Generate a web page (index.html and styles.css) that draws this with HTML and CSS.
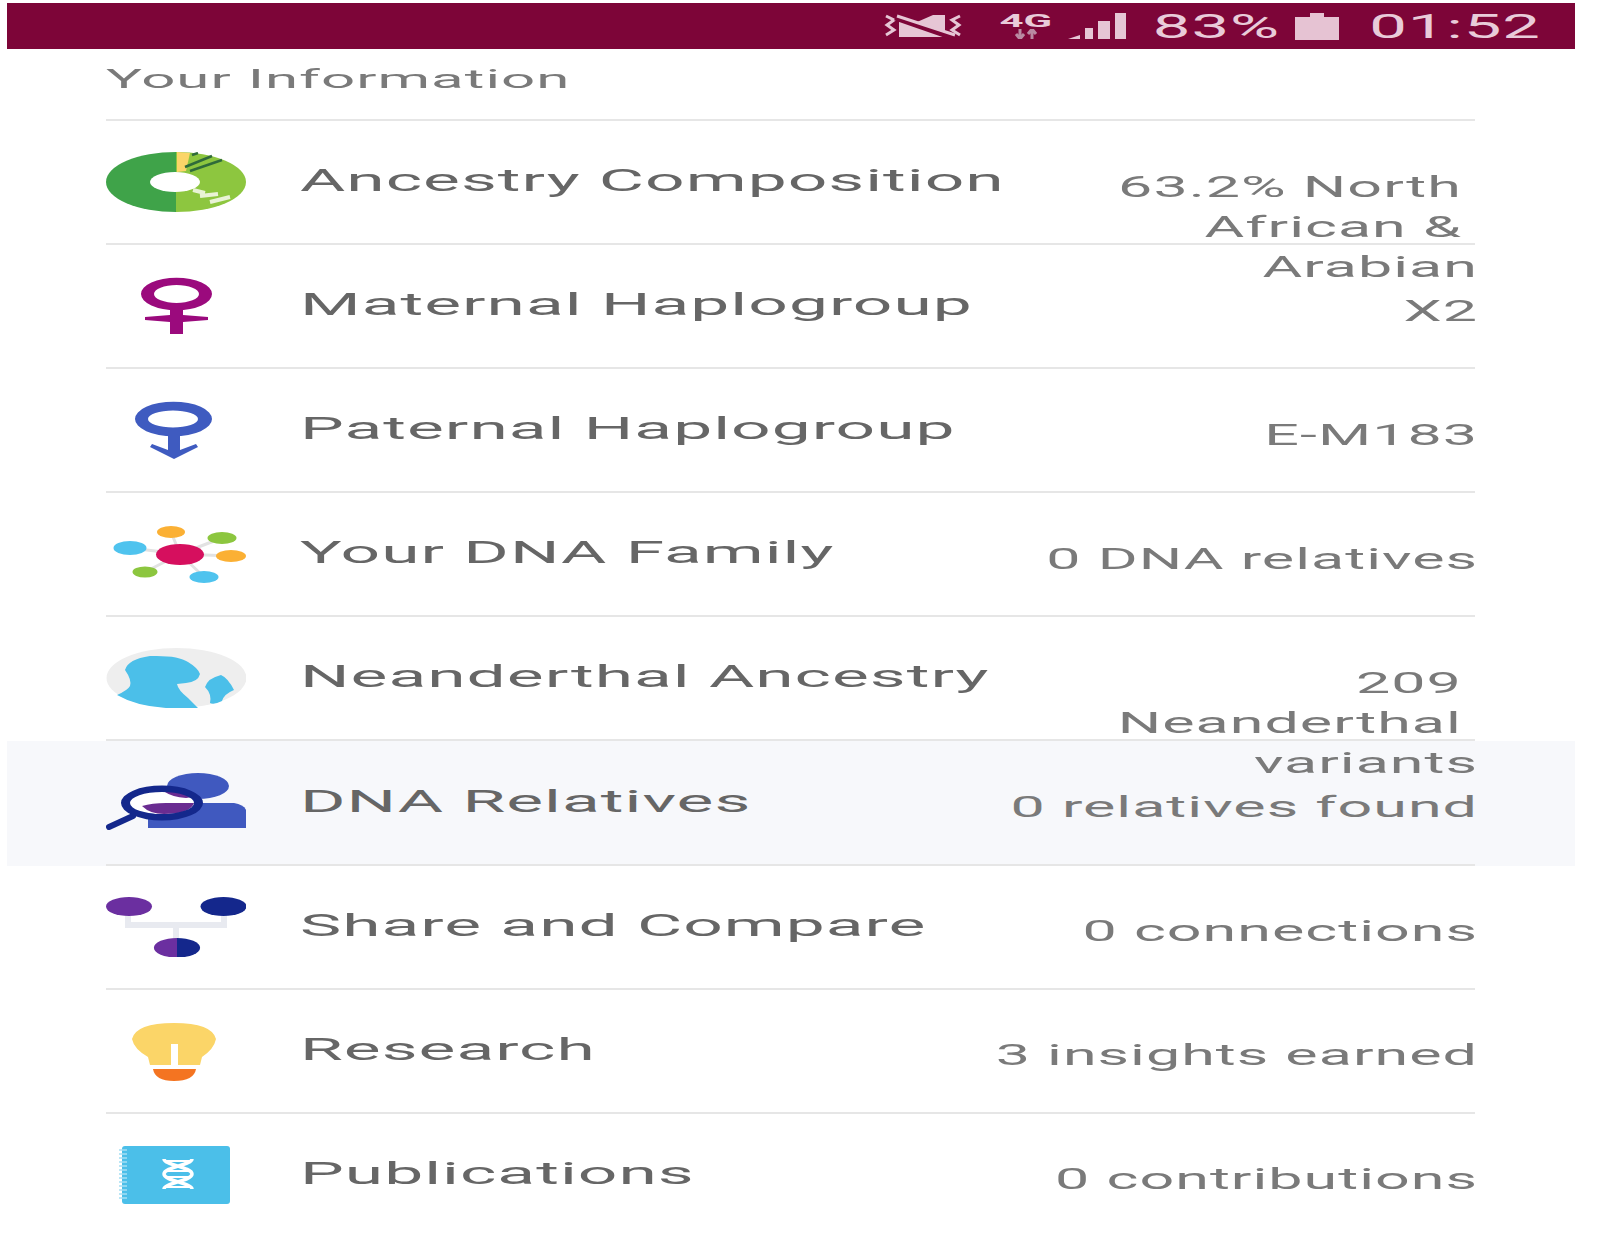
FILE: index.html
```html
<!DOCTYPE html>
<html lang="en">
<head>
  <meta charset="UTF-8" />
  <meta name="viewport" content="width=device-width, initial-scale=1.0" />
  <title>Your Information</title>
  <link rel="stylesheet" href="styles.css">
</head>
<body>
  <div class="page">
    <div class="status">
      <svg class="status-mute" viewBox="0 0 84 26">
        <path d="M5 3 L13 7 L6 12 L13 17 L5 22 M79 3 L71 7 L78 12 L71 17 L79 22" fill="none" stroke="#e6c6d5" stroke-width="3" />
        <path d="M18 9 H36 L52 2 H64 V24 H18 Z" fill="#e6c6d5" />
        <path d="M14 5 L72 25" stroke="#7d0538" stroke-width="5" />
        <path d="M16 3 L74 22" stroke="#e6c6d5" stroke-width="3" />
      </svg>
      <div class="status-net">
        <span class="net-text">4G</span>
        <svg class="net-arrows" viewBox="0 0 30 10">
          <path d="M9 0 V9 M5 5 L9 10 L13 5 M21 10 V1 M17 5 L21 0 L25 5" fill="none" stroke="#b98aa2" stroke-width="3" />
        </svg>
      </div>
      <svg class="status-signal" viewBox="0 0 58 26">
        <path d="M0 26 L12 22 V26 Z M17 15 H25 V26 H17 Z M30 8 H42 V26 H30 Z M47 0 H58 V26 H47 Z" fill="#e6c6d5" />
      </svg>
      <span class="status-text status-pct">83%</span>
      <svg class="status-batt" viewBox="0 0 44 27">
        <path d="M0 4 H15 V0 H29 V4 H44 V27 H0 Z" fill="#e6c3d3" />
      </svg>
      <span class="status-text status-time">01:52</span>
    </div>

    <div class="section-title"><span class="title-text">Your Information</span></div>

    <ul class="rows">
      <li class="row">
        <svg class="icon" viewBox="0 0 140 60">
          <path d="M70 0 A70 30 0 0 0 70 60 Z" fill="#3fa349" />
          <path d="M70 0 A70 30 0 0 1 70 60 Z" fill="#8dc63f" />
          <path d="M71 0 L84 1 L80 19 L71 20 Z" fill="#fbd568" />
          <path d="M79 15 L106 4 M84 19 L116 8 M86 3 L92 1" stroke="#2f6b3a" stroke-width="2.500" />
          <path d="M87 38 L99 41 M94 44 L112 42 M104 50 L124 45" stroke="#e9f3d6" stroke-width="4" />
          <ellipse cx="69" cy="30" rx="25" ry="10" fill="#fff" />
        </svg>
        <span class="label">Ancestry Composition</span>
        <span class="value">63.2% North&nbsp;<br>African &amp;&nbsp;<br>Arabian</span>
      </li>
      <li class="row">
        <svg class="icon" viewBox="0 0 140 60">
          <path fill="#9b0a7d" fill-rule="evenodd" d="M35 18 A35 16 0 0 1 106 18 A35 16 0 0 1 35 18 Z M48 18 A22.500 9 0 0 0 93 18 A22.500 9 0 0 0 48 18 Z" />
          <path fill="#9b0a7d" d="M64 30 H77 V39 L102 41 V44 L77 46 V58 H64 V46 L39 44 V41 L64 39 Z" />
        </svg>
        <span class="label">Maternal Haplogroup</span>
        <span class="value">X2</span>
      </li>
      <li class="row">
        <svg class="icon" viewBox="0 0 140 60">
          <path fill="#3f5bc0" fill-rule="evenodd" d="M29 19 A38 17 0 0 1 106 19 A38 17 0 0 1 29 19 Z M42 19 A25 8.500 0 0 0 92 19 A25 8.500 0 0 0 42 19 Z" />
          <path fill="#3f5bc0" d="M62 35 H74 V50 L90 44 L92 47 L68 59 L44 47 L46 44 L62 50 Z" />
        </svg>
        <span class="label">Paternal Haplogroup</span>
        <span class="value">E-M183</span>
      </li>
      <li class="row">
        <svg class="icon" viewBox="0 0 140 60">
          <path d="M74 30 L65 8 M74 30 L116 14 M74 30 L125 32 M74 30 L98 53 M74 30 L39 48 M74 30 L24 24" stroke="#e2e2e2" stroke-width="3" />
          <ellipse cx="74" cy="30.500" rx="24" ry="10.500" fill="#d60f5e" />
          <ellipse cx="65" cy="8" rx="14" ry="6" fill="#fbb034" />
          <ellipse cx="116" cy="14" rx="14.500" ry="6" fill="#8cc63f" />
          <ellipse cx="125" cy="32" rx="15" ry="6" fill="#fbb034" />
          <ellipse cx="98" cy="53" rx="14.500" ry="6" fill="#4fc3ee" />
          <ellipse cx="39" cy="48" rx="12.500" ry="5.500" fill="#8cc63f" />
          <ellipse cx="24" cy="24" rx="16.500" ry="7" fill="#4fc3ee" />
        </svg>
        <span class="label">Your DNA Family</span>
        <span class="value">0 DNA relatives</span>
      </li>
      <li class="row">
        <svg class="icon" viewBox="0 0 140 60">
          <ellipse cx="70.500" cy="30" rx="70" ry="30" fill="#eeeeee" />
          <path fill="#4bbfe9" d="M19 22 Q22 11 44 8 Q72 7 82 14 Q92 20 94 26 Q92 34 80 35 L71 36 Q72 42 82 50 Q88 56 92 60 L60 60 Q30 58 11 47 Q22 42 24 38 Q26 32 19 22 Z" />
          <path fill="#4bbfe9" d="M99 39 Q102 30 115 27 Q122 30 128 42 Q118 46 116 53 Q108 57 104 55 Q106 46 99 39 Z" />
        </svg>
        <span class="label">Neanderthal Ancestry</span>
        <span class="value">209&nbsp;<br>Neanderthal&nbsp;<br>variants</span>
      </li>
      <li class="row row-active">
        <svg class="icon" viewBox="0 0 140 60">
          <ellipse cx="92" cy="13" rx="31" ry="13" fill="#4059bf" />
          <path d="M42 55 V38 Q44 30 58 30 H128 Q140 32 141 40 V55 Z" fill="#4059bf" />
          <ellipse cx="56" cy="30" rx="33" ry="11" fill="#fff" />
          <path d="M36 33 Q46 30 60 30 H88 Q84 41 58 41 Q44 41 36 33 Z" fill="#6a2c91" />
          <path d="M59 19 Q74 17 87 24 L80 25 Q66 24 59 19 Z" fill="#6a2c91" />
          <path fill="#14288c" fill-rule="evenodd" d="M15 30 A41 17.500 0 0 1 97 30 A41 17.500 0 0 1 15 30 Z M24 30 A32 11 0 0 0 88 30 A32 11 0 0 0 24 30 Z" />
          <path d="M3 54 L27 43" stroke="#14288c" stroke-width="6" stroke-linecap="round" />
        </svg>
        <span class="label">DNA Relatives</span>
        <span class="value">0 relatives found</span>
      </li>
      <li class="row">
        <svg class="icon" viewBox="0 0 140 60">
          <path d="M22 14 V28 H118 V14 M70 28 V44" fill="none" stroke="#e8eaf0" stroke-width="6" />
          <ellipse cx="23" cy="9.500" rx="23" ry="9.500" fill="#6b2fa0" />
          <ellipse cx="117.500" cy="9.500" rx="23" ry="9.500" fill="#14278c" />
          <path d="M71 41 A23 9.700 0 0 0 71 60.500 Z" fill="#6b2fa0" />
          <path d="M71 41 A23 9.700 0 0 1 71 60.500 Z" fill="#14278c" />
        </svg>
        <span class="label">Share and Compare</span>
        <span class="value">0 connections</span>
      </li>
      <li class="row">
        <svg class="icon" viewBox="0 0 140 60">
          <path fill="#fbd568" d="M26 18 Q30 2 68 2 Q106 2 110 18 Q108 28 96 36 L94 44 H44 L42 36 Q28 28 26 18 Z" />
          <path fill="#fff" d="M65 23 H72 V44 H65 Z" />
          <path fill="#f47421" d="M47 48 H90 Q88 60 68 60 Q49 60 47 48 Z" />
        </svg>
        <span class="label">Research</span>
        <span class="value">3 insights earned</span>
      </li>
      <li class="row row-last">
        <svg class="icon" viewBox="0 0 140 60">
          <rect x="16" y="1" width="108" height="58" rx="3" fill="#4bbfe9" />
          <path d="M13 5 H21 M13 9 H21 M13 13 H21 M13 17 H21 M13 21 H21 M13 25 H21 M13 29 H21 M13 33 H21 M13 37 H21 M13 41 H21 M13 45 H21 M13 49 H21 M13 53 H21" stroke="#a5dff4" stroke-width="1.500" />
          <path d="M58 14 C58 20 86 22 86 29 C86 36 58 38 58 44 M86 14 C86 20 58 22 58 29 C58 36 86 38 86 44" fill="none" stroke="#fff" stroke-width="3.500" />
          <path d="M60 16 H84 M62 26 H82 M62 32 H82 M60 42 H84" stroke="#fff" stroke-width="2" />
        </svg>
        <span class="label">Publications</span>
        <span class="value">0 contributions</span>
      </li>
    </ul>
  </div>
</body>
</html>
```

FILE: styles.css
```css
body {
  margin: 0;
  background-color: #fff;
  font-family: Roboto, "Liberation Sans", sans-serif;
  overflow: hidden;
}

/* the source picture is soft, so everything gets a slight blur */
.page {
  width: 1568px;
  margin: 3px 0 0 7px;
  filter: blur(.5px);
}

/* status bar */
.status {
  height: 46px;
  background-color: #7d0538;
  color: #e9cbd9;
  display: flex;
  align-items: center;
  justify-content: flex-end;
  padding-right: 34px;
}

.status-mute {
  width: 84px;
  height: 26px;
  margin-right: 36px;
}

.status-net {
  width: 50px;
  margin-right: 17px;
  display: flex;
  flex-direction: column;
  align-items: center;
}

.net-text {
  font-size: 42px;
  font-weight: 700;
  line-height: 16px;
  height: 16px;
  transform: scaleY(.42);
}

.net-arrows {
  width: 30px;
  height: 10px;
}

.status-signal {
  width: 58px;
  height: 26px;
  margin-right: 27px;
}

.status-text {
  font-size: 67px;
  line-height: 46px;
  letter-spacing: 1px;
  transform: scaleY(.5);
}

.status-batt {
  width: 44px;
  height: 27px;
  margin: 0 30px 0 15px;
}

/* section heading */
.section-title {
  margin: 0 100px 0 99px;
  height: 70px;
  border-bottom: 2px solid #e6e6e6;
  display: flex;
  align-items: center;
}

.title-text {
  font-size: 60px;
  letter-spacing: 1px;
  line-height: 60px;
  color: #7a7a7a;
  transform: scaleY(.42);
  margin-top: -8px;
}

/* rows */
.rows {
  list-style: none;
  margin: 0;
  padding: 0;
}

.row {
  height: 124.100px;
  padding: 0 100px 0 99px;
  display: flex;
  align-items: center;
  position: relative;
}

.row::after {
  content: "";
  position: absolute;
  left: 99px;
  right: 100px;
  bottom: 0;
  height: 2px;
  background-color: #e6e6e6;
}

.row-active {
  background-color: #f7f8fb;
}

.row-last::after {
  display: none;
}

.icon {
  width: 140px;
  height: 60px;
  flex-shrink: 0;
  margin-top: -2px;
}

.label {
  margin-left: 54px;
  font-size: 69.500px;
  letter-spacing: 1px;
  line-height: 80px;
  color: #666;
  white-space: nowrap;
  transform: scaleY(.44);
  margin-top: -4px;
}

/* long values run past the row on purpose, over the next one */
.value {
  margin-left: auto;
  margin-right: -3px;
  z-index: 1;
  height: 85px;
  margin-top: 8px;
  font-size: 61px;
  line-height: 85px;
  letter-spacing: 1px;
  color: #7a7a7a;
  text-align: right;
  white-space: nowrap;
  transform: scaleY(.47);
  transform-origin: 50% 42.500px;
}
```
